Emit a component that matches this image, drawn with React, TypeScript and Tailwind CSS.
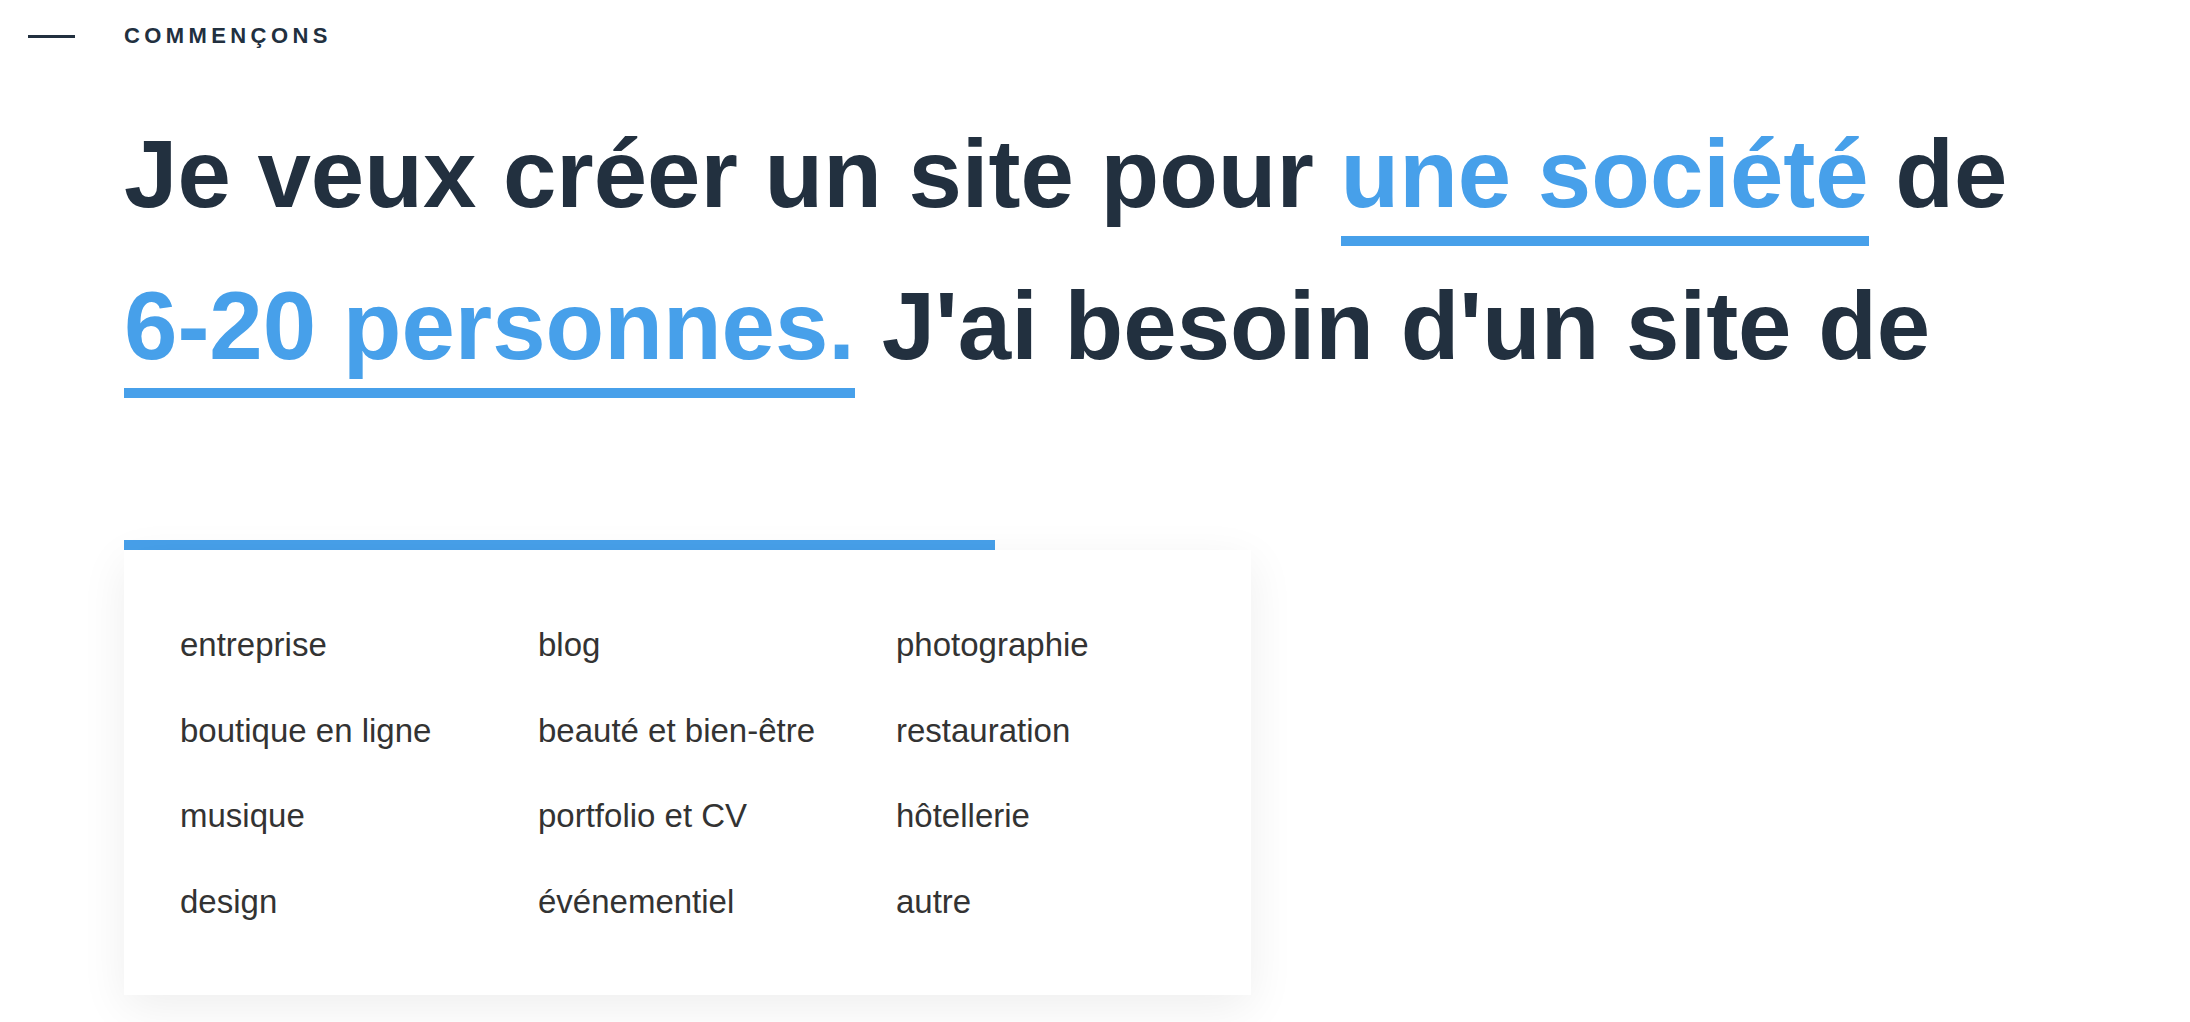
const options = [
  'entreprise',
  'blog',
  'photographie',
  'boutique en ligne',
  'beauté et bien-être',
  'restauration',
  'musique',
  'portfolio et CV',
  'hôtellerie',
  'design',
  'événementiel',
  'autre',
];

function Choice({ children }: { children: React.ReactNode }) {
  return (
    <span className="inline-block border-b-[10px] border-[#47a0ea] pb-[14px] leading-none text-[#47a0ea]">
      {children}
    </span>
  );
}

export default function App() {
  return (
    <div
      className="min-h-screen bg-white text-[#22303f]"
      style={{ fontFamily: '"Liberation Sans", Arial, sans-serif' }}
    >
      {/* Eyebrow */}
      <div className="flex h-[72px] items-center pl-[28px]">
        <span className="h-[3px] w-[47px] bg-[#22303f]" />
        <span className="ml-[49px] text-[22px] font-bold uppercase leading-none tracking-[0.2em]">
          Commençons
        </span>
      </div>

      {/* Sentence builder */}
      <h1 className="mt-[26px] pl-[124px] pr-[40px] text-[96px] font-bold leading-[152px]">
        Je veux créer un site pour <Choice>une société</Choice> de{' '}
        <Choice>6-20 personnes.</Choice> J'ai besoin d'un site de{' '}
        <span className="relative inline-block w-[871px] border-b-[10px] border-[#47a0ea] pb-[14px] leading-none">
          {'\u00a0'}
          <div className="absolute left-0 top-[calc(100%+10px)] z-10 w-[1127px] bg-white pb-[51px] pl-[56px] pt-[52px] shadow-[0_12px_44px_rgba(0,0,0,0.07)]">
            <ul className="grid grid-cols-[358px_358px_358px]">
              {options.map((o) => (
                <li
                  key={o}
                  className="flex h-[85.5px] cursor-pointer items-center text-[33px] font-normal leading-none text-[#333333] hover:text-[#47a0ea]"
                >
                  {o}
                </li>
              ))}
            </ul>
          </div>
        </span>
      </h1>
    </div>
  );
}
